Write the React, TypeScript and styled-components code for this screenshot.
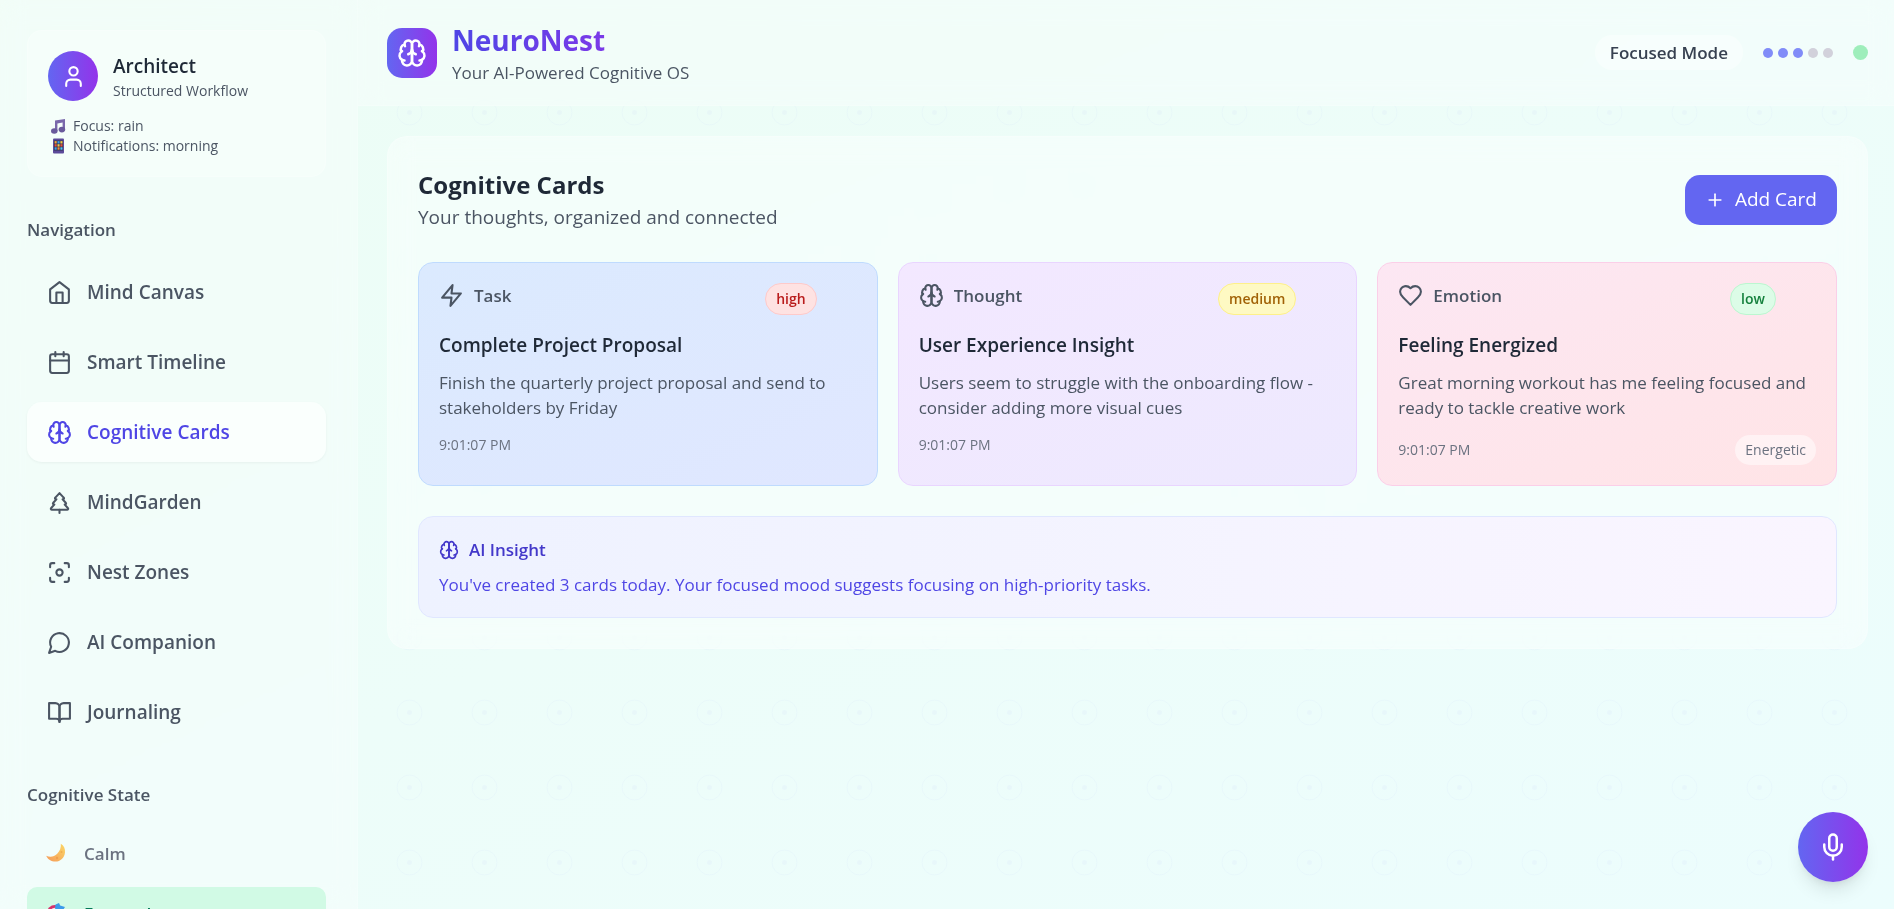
import React from "react";
import styled, { createGlobalStyle, css } from "styled-components";
import { Focus, Plus, TreePine } from "lucide-react";

const GlobalStyle = createGlobalStyle`
  *, *::before, *::after { box-sizing: border-box; }
  body {
    margin: 0;
    font-family: "Open Sans", "Noto Sans", sans-serif;
    font-size: 17px;
    line-height: 25px;
    color: #1f2937;
  }
  h1, h2, h3, p, ul { margin: 0; padding: 0; }
  ul { list-style: none; }
  button { font: inherit; border: 0; cursor: pointer; }
`;

/* ---------- icons ---------- */

const Icon = styled.svg.attrs({ viewBox: "0 0 24 24", "aria-hidden": true })<{ $size?: number }>`
  width: ${(p) => p.$size ?? 25}px;
  height: ${(p) => p.$size ?? 25}px;
  flex: none;
  fill: none;
  stroke: currentColor;
  stroke-width: 2;
  stroke-linecap: round;
  stroke-linejoin: round;
`;

const BrainIcon = ({ size }: { size?: number }) => (
  <Icon $size={size}>
    <path d="M12 5a3 3 0 1 0-5.997.125 4 4 0 0 0-2.526 5.77 4 4 0 0 0 .556 6.588A4 4 0 1 0 12 18Z" />
    <path d="M12 5a3 3 0 1 1 5.997.125 4 4 0 0 1 2.526 5.77 4 4 0 0 1-.556 6.588A4 4 0 1 1 12 18Z" />
    <path d="M15 13a4.5 4.5 0 0 1-3-4 4.5 4.5 0 0 1-3 4" />
    <path d="M17.599 6.5a3 3 0 0 0 .399-1.375" />
    <path d="M6.003 5.125A3 3 0 0 0 6.401 6.5" />
    <path d="M3.477 10.896a4 4 0 0 1 .585-.396" />
    <path d="M19.938 10.5a4 4 0 0 1 .585.396" />
    <path d="M6 18a4 4 0 0 1-1.967-.516" />
    <path d="M19.967 17.484A4 4 0 0 1 18 18" />
  </Icon>
);
const HomeIcon = () => (
  <Icon>
    <path d="m3 9 9-7 9 7v11a2 2 0 0 1-2 2H5a2 2 0 0 1-2-2z" />
    <path d="M9 22V12h6v10" />
  </Icon>
);
const CalendarIcon = () => (
  <Icon>
    <rect x="3" y="4" width="18" height="18" rx="2" />
    <path d="M16 2v4M8 2v4M3 10h18" />
  </Icon>
);
const ChatIcon = () => (
  <Icon>
    <path d="M7.9 20A9 9 0 1 0 4 16.1L2 22Z" />
  </Icon>
);
const BookIcon = () => (
  <Icon>
    <path d="M2 3h6a4 4 0 0 1 4 4v14a3 3 0 0 0-3-3H2z" />
    <path d="M22 3h-6a4 4 0 0 0-4 4v14a3 3 0 0 1 3-3h7z" />
  </Icon>
);
const UserIcon = () => (
  <Icon>
    <path d="M19 21v-2a4 4 0 0 0-4-4H9a4 4 0 0 0-4 4v2" />
    <circle cx="12" cy="7" r="4" />
  </Icon>
);
const ZapIcon = () => (
  <Icon>
    <path d="M13 2 3 14h9l-1 8 10-12h-9l1-8z" />
  </Icon>
);
const HeartIcon = () => (
  <Icon>
    <path d="M19 14c1.49-1.46 3-3.21 3-5.5A5.5 5.5 0 0 0 16.5 3c-1.76 0-3 .5-4.5 2-1.5-1.5-2.74-2-4.5-2A5.5 5.5 0 0 0 2 8.5c0 2.3 1.5 4.05 3 5.5l7 7Z" />
  </Icon>
);
const MicIcon = () => (
  <Icon $size={30}>
    <path d="M12 2a3 3 0 0 0-3 3v7a3 3 0 0 0 6 0V5a3 3 0 0 0-3-3Z" />
    <path d="M19 10v2a7 7 0 0 1-14 0v-2" />
    <path d="M12 19v3" />
  </Icon>
);

const Emoji = styled.svg.attrs({ viewBox: "0 0 20 20", "aria-hidden": true })<{ $size: number }>`
  width: ${(p) => p.$size}px;
  height: ${(p) => p.$size}px;
  flex: none;
`;

const NoteEmoji = () => (
  <Emoji $size={20}>
    <path d="M7 4.5 17 3v10.5h-2.4V6.6L9.4 7.4V15H7z" fill="#7a68ab" />
    <ellipse cx="6.3" cy="15" rx="3.3" ry="2.8" fill="#6a5a9c" />
    <ellipse cx="13.9" cy="13.6" rx="3.3" ry="2.8" fill="#6a5a9c" />
  </Emoji>
);
const PhoneEmoji = () => (
  <Emoji $size={20}>
    <rect x="5" y="2.5" width="11" height="15" rx="1" fill="#5c4a9a" />
    <rect x="6" y="4.5" width="9" height="10" fill="#2f3350" />
    {["#f2a33c", "#3aa0e8", "#f2c84b", "#e8503a", "#f2c84b", "#e8503a", "#3aa0e8", "#f28a3c", "#4fc3f7"].map((c, i) => (
      <rect key={i} x={6.6 + (i % 3) * 2.9} y={5.1 + Math.floor(i / 3) * 3.1} width="2.1" height="2.4" fill={c} />
    ))}
  </Emoji>
);
const MoonEmoji = () => (
  <Emoji $size={20}>
    <defs>
      <linearGradient id="moon" x1="1" y1="0" x2="0" y2="1">
        <stop offset="0" stopColor="#fbd766" />
        <stop offset="1" stopColor="#f59a5a" />
      </linearGradient>
    </defs>
    <path d="M14.8.8c3 1.8 4.6 4.9 4.2 8.7-.6 5.3-4.5 9.1-9.5 9.1C5.2 18.6 1.8 16.5.2 12.8c3.8 1.600 8 1 11-2 2.700-2.600 4-6.300 3.600-10z" fill="url(#moon)" />
    <circle cx="15.5" cy="9" r="1" fill="#f0ad4e" />
    <circle cx="11" cy="15" r="1.2" fill="#f0a04e" />
  </Emoji>
);
const TargetEmoji = () => (
  <Emoji $size={20}>
    <circle cx="9" cy="10.5" r="8.5" fill="#d6336c" />
    <circle cx="9" cy="10.5" r="5.8" fill="#f8e8ee" />
    <circle cx="9" cy="10.5" r="3.2" fill="#d6336c" />
    <path d="M9 10.5 15 4.5" stroke="#1769c2" strokeWidth="1.5" />
    <path d="M9 5.500 9.500 1.500 13 0l1.200 2.500L19 4l-2 3-5.500.6z" fill="#3b9bea" />
  </Emoji>
);

/* ---------- page ---------- */

const Page = styled.div`
  position: relative;
  display: flex;
  height: 100vh;
  overflow: hidden;
  background: linear-gradient(to bottom right, #ecfdf5, #edfdf9, #ecfdfd);
`;

const Pattern = styled.svg`
  position: absolute;
  inset: 0;
  width: 100%;
  height: 100%;
  opacity: 0.03;
`;

const Sidebar = styled.aside`
  position: relative;
  flex: 0 0 358px;
  height: 100%;
  padding: 30px 31px 30px 27px;
  overflow-y: auto;
  scrollbar-width: none;
  background: rgba(255, 255, 255, 0.3);
  backdrop-filter: blur(12px);
  border-right: 1px solid rgba(255, 255, 255, 0.2);
`;

const gradientFill = css`
  background: linear-gradient(to right, #6366f1, #9333ea);
  color: #fff;
`;

const ProfileCard = styled.section`
  padding: 20px;
  margin-bottom: 40px;
  border: 1px solid rgba(255, 255, 255, 0.2);
  border-radius: 15px;
  background: rgba(255, 255, 255, 0.25);
`;

const ProfileTop = styled.div`
  display: flex;
  align-items: center;
  gap: 15px;
  margin-bottom: 15px;
`;

const Tile = styled.div<{ $round?: boolean }>`
  ${gradientFill}
  display: flex;
  align-items: center;
  justify-content: center;
  flex: none;
  width: 50px;
  height: 50px;
  border-radius: ${(p) => (p.$round ? "50%" : "15px")};
`;

const ProfileName = styled.h2`
  font-size: 19px;
  line-height: 30px;
  font-weight: 600;
`;

const SmallText = styled.p`
  font-size: 14px;
  line-height: 20px;
  color: #4b5563;
`;

const PrefRow = styled(SmallText)`
  display: flex;
  align-items: center;
  gap: 5px;
`;

const SectionTitle = styled.h2`
  margin-bottom: 20px;
  font-size: 17px;
  line-height: 25px;
  font-weight: 600;
  color: #4b5563;
`;

const NavList = styled.ul<{ $gap: number }>`
  display: flex;
  flex-direction: column;
  gap: ${(p) => p.$gap}px;
  margin-bottom: 40px;
`;

const NavButton = styled.button<{ $active?: boolean }>`
  display: flex;
  align-items: center;
  gap: 15px;
  width: 100%;
  height: 60px;
  padding: 0 20px;
  border-radius: 15px;
  font-size: 19px;
  font-weight: 600;
  color: ${(p) => (p.$active ? "#4f46e5" : "#4b5563")};
  background: ${(p) => (p.$active ? "rgba(255, 255, 255, 0.6)" : "transparent")};
  box-shadow: ${(p) => (p.$active ? "0 1px 3px rgba(0, 0, 0, 0.05)" : "none")};
`;

const StateButton = styled(NavButton)`
  gap: 18px;
  height: 52px;
  padding: 0 19px;
  border-radius: 10px;
  font-size: 17px;
  color: ${(p) => (p.$active ? "#047857" : "#6b7280")};
  background: ${(p) => (p.$active ? "#d1fae5" : "transparent")};
  box-shadow: none;
`;

const Main = styled.div`
  position: relative;
  flex: 1;
  min-width: 0;
`;

const TopBar = styled.header`
  display: flex;
  align-items: center;
  justify-content: space-between;
  padding: 20px 26px 20px 29px;
  background: rgba(255, 255, 255, 0.3);
  backdrop-filter: blur(12px);
  border-bottom: 1px solid rgba(255, 255, 255, 0.2);
`;

const Brand = styled.div`
  display: flex;
  align-items: center;
  gap: 15px;
`;

const BrandName = styled.h1`
  font-size: 28px;
  line-height: 40px;
  font-weight: 700;
  color: transparent;
  background: linear-gradient(to right, #4f46e5, #9333ea);
  background-clip: text;
`;

const Tagline = styled.p`
  color: #4b5563;
`;

const Status = styled.div`
  display: flex;
  align-items: center;
  gap: 20px;
`;

const ModePill = styled.span`
  padding: 5px 15px;
  border-radius: 18px;
  font-weight: 600;
  color: #374151;
  background: rgba(255, 255, 255, 0.4);
`;

const Dots = styled.div`
  display: flex;
  gap: 5px;
`;

const Dot = styled.span<{ $on?: boolean }>`
  width: 10px;
  height: 10px;
  border-radius: 50%;
  background: ${(p) => (p.$on ? "#818cf8" : "#d2d1db")};
`;

const Online = styled.span`
  width: 15px;
  height: 15px;
  border-radius: 50%;
  background: #9eeebb;
`;

const Content = styled.main`
  padding: 30px 26px 30px 29px;
`;

const Panel = styled.section`
  padding: 30px;
  border: 1px solid rgba(255, 255, 255, 0.2);
  border-radius: 20px;
  background: rgba(255, 255, 255, 0.4);
  backdrop-filter: blur(12px);
`;

const PanelHead = styled.div`
  display: flex;
  align-items: center;
  justify-content: space-between;
  margin-bottom: 30px;
`;

const PanelTitle = styled.h2`
  font-size: 24px;
  line-height: 35px;
  font-weight: 700;
`;

const PanelText = styled.p`
  font-size: 19px;
  line-height: 30px;
  color: #4b5563;
`;

const AddButton = styled.button`
  display: flex;
  align-items: center;
  gap: 10px;
  height: 50px;
  padding: 0 20px;
  border-radius: 15px;
  font-size: 19px;
  font-weight: 500;
  color: #fff;
  background: #6366f1;
`;

const CardGrid = styled.div`
  display: grid;
  grid-template-columns: repeat(3, minmax(0, 1fr));
  gap: 20px;
  margin-bottom: 30px;
`;

const Card = styled.article<{ $fill: string; $line: string }>`
  padding: 20px;
  border: 1px solid ${(p) => p.$line};
  border-radius: 15px;
  background: linear-gradient(to bottom right, ${(p) => p.$fill});
`;

const CardHead = styled.div`
  display: flex;
  align-items: flex-start;
  justify-content: space-between;
  margin-bottom: 15px;
  padding-right: 40px;
`;

const CardKind = styled.div`
  display: flex;
  align-items: center;
  gap: 10px;
  font-weight: 600;
  color: #4b5563;
`;

const Priority = styled.span<{ $ink: string; $fill: string; $line: string }>`
  padding: 5px 10px;
  border: 1px solid ${(p) => p.$line};
  border-radius: 16px;
  font-size: 14px;
  line-height: 20px;
  font-weight: 600;
  color: ${(p) => p.$ink};
  background: ${(p) => p.$fill};
`;

const CardTitle = styled.h3`
  margin-bottom: 10px;
  font-size: 19px;
  line-height: 30px;
  font-weight: 600;
`;

const CardText = styled.p`
  margin-bottom: 15px;
  color: #4b5563;
`;

const CardFoot = styled.div`
  display: flex;
  align-items: center;
  justify-content: space-between;
  font-size: 14px;
  line-height: 20px;
  color: #6b7280;
`;

const Mood = styled.span`
  padding: 5px 10px;
  border-radius: 15px;
  background: rgba(255, 255, 255, 0.5);
`;

const Insight = styled.section`
  padding: 20px;
  border: 1px solid #e0e7ff;
  border-radius: 15px;
  background: linear-gradient(to right, #eef2ff, #faf5ff);
  color: #4f46e5;
`;

const InsightTitle = styled.h3`
  display: flex;
  align-items: center;
  gap: 10px;
  margin-bottom: 10px;
  font-size: 17px;
  line-height: 25px;
  font-weight: 600;
  color: #4338ca;
`;

const VoiceButton = styled.button`
  ${gradientFill}
  position: absolute;
  right: 26px;
  bottom: 27px;
  display: flex;
  align-items: center;
  justify-content: center;
  width: 70px;
  height: 70px;
  border-radius: 50%;
  box-shadow: 0 12px 18px -4px rgba(0, 0, 0, 0.1), 0 5px 8px -5px rgba(0, 0, 0, 0.1);
`;

const navItems = [
  { label: "Mind Canvas", icon: <HomeIcon /> },
  { label: "Smart Timeline", icon: <CalendarIcon /> },
  { label: "Cognitive Cards", icon: <BrainIcon /> },
  { label: "MindGarden", icon: <TreePine size={25} /> },
  { label: "Nest Zones", icon: <Focus size={25} /> },
  { label: "AI Companion", icon: <ChatIcon /> },
  { label: "Journaling", icon: <BookIcon /> },
];

const cards = [
  {
    kind: "Task",
    icon: <ZapIcon />,
    priority: "high",
    badge: { $ink: "#b91c1c", $fill: "#fee2e2", $line: "#fecaca" },
    fill: "#dbeafe, #e0e7ff",
    line: "#bfdbfe",
    title: "Complete Project Proposal",
    text: "Finish the quarterly project proposal and send to stakeholders by Friday",
  },
  {
    kind: "Thought",
    icon: <BrainIcon />,
    priority: "medium",
    badge: { $ink: "#a16207", $fill: "#fef9c3", $line: "#fef08a" },
    fill: "#f3e8ff, #ede9fe",
    line: "#e9d5ff",
    title: "User Experience Insight",
    text: "Users seem to struggle with the onboarding flow - consider adding more visual cues",
  },
  {
    kind: "Emotion",
    icon: <HeartIcon />,
    priority: "low",
    badge: { $ink: "#15803d", $fill: "#dcfce7", $line: "#bbf7d0" },
    fill: "#fce7f3, #ffe4e6",
    line: "#fbcfe8",
    title: "Feeling Energized",
    text: "Great morning workout has me feeling focused and ready to tackle creative work",
    mood: "Energetic",
  },
];

export default function App() {
  return (
    <>
      <GlobalStyle />
      <Page>
        <Pattern aria-hidden="true">
          <defs>
            <pattern id="rings" x="-3" width="75" height="75" patternUnits="userSpaceOnUse">
              <circle cx="37.5" cy="37.5" r="12.5" fill="none" stroke="#6366f1" />
              <circle cx="37.5" cy="37.5" r="2.5" fill="#6366f1" />
            </pattern>
          </defs>
          <rect width="100%" height="100%" fill="url(#rings)" />
        </Pattern>

        <Sidebar>
          <ProfileCard>
            <ProfileTop>
              <Tile $round>
                <UserIcon />
              </Tile>
              <div>
                <ProfileName>Architect</ProfileName>
                <SmallText>Structured Workflow</SmallText>
              </div>
            </ProfileTop>
            <PrefRow>
              <NoteEmoji />
              Focus: rain
            </PrefRow>
            <PrefRow>
              <PhoneEmoji />
              Notifications: morning
            </PrefRow>
          </ProfileCard>

          <nav aria-label="Navigation">
            <SectionTitle>Navigation</SectionTitle>
            <NavList $gap={10}>
              {navItems.map((item) => (
                <li key={item.label}>
                  <NavButton $active={item.label === "Cognitive Cards"}>
                    {item.icon}
                    {item.label}
                  </NavButton>
                </li>
              ))}
            </NavList>
          </nav>

          <SectionTitle>Cognitive State</SectionTitle>
          <NavList $gap={8}>
            <li>
              <StateButton>
                <MoonEmoji />
                Calm
              </StateButton>
            </li>
            <li>
              <StateButton $active>
                <TargetEmoji />
                Focused
              </StateButton>
            </li>
          </NavList>
        </Sidebar>

        <Main>
          <TopBar>
            <Brand>
              <Tile>
                <BrainIcon size={30} />
              </Tile>
              <div>
                <BrandName>NeuroNest</BrandName>
                <Tagline>Your AI-Powered Cognitive OS</Tagline>
              </div>
            </Brand>
            <Status>
              <ModePill>Focused Mode</ModePill>
              <Dots>
                {[1, 2, 3, 4, 5].map((n) => (
                  <Dot key={n} $on={n <= 3} />
                ))}
              </Dots>
              <Online />
            </Status>
          </TopBar>

          <Content>
            <Panel>
              <PanelHead>
                <div>
                  <PanelTitle>Cognitive Cards</PanelTitle>
                  <PanelText>Your thoughts, organized and connected</PanelText>
                </div>
                <AddButton>
                  <Plus size={20} />
                  Add Card
                </AddButton>
              </PanelHead>

              <CardGrid>
                {cards.map((card) => (
                  <Card key={card.kind} $fill={card.fill} $line={card.line}>
                    <CardHead>
                      <CardKind>
                        {card.icon}
                        {card.kind}
                      </CardKind>
                      <Priority {...card.badge}>{card.priority}</Priority>
                    </CardHead>
                    <CardTitle>{card.title}</CardTitle>
                    <CardText>{card.text}</CardText>
                    <CardFoot>
                      <span>9:01:07 PM</span>
                      {card.mood && <Mood>{card.mood}</Mood>}
                    </CardFoot>
                  </Card>
                ))}
              </CardGrid>

              <Insight>
                <InsightTitle>
                  <BrainIcon size={20} />
                  AI Insight
                </InsightTitle>
                <p>You've created 3 cards today. Your focused mood suggests focusing on high-priority tasks.</p>
              </Insight>
            </Panel>
          </Content>
        </Main>

        <VoiceButton aria-label="Voice input">
          <MicIcon />
        </VoiceButton>
      </Page>
    </>
  );
}
